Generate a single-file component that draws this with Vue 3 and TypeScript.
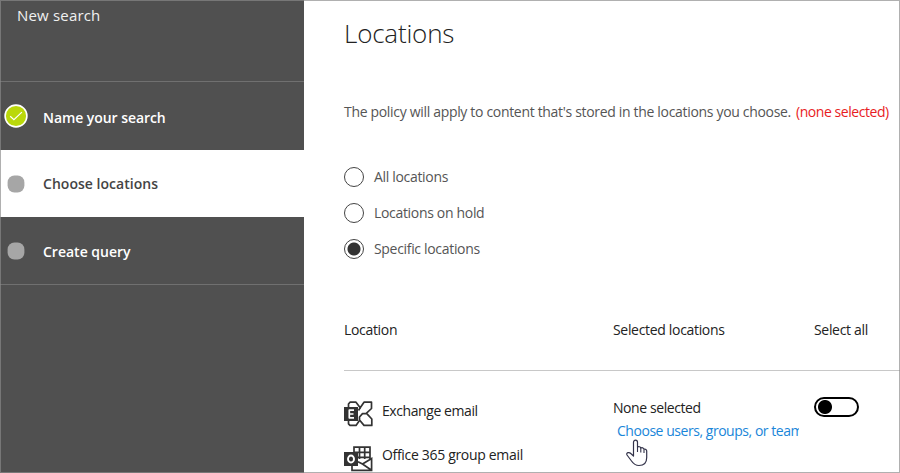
<script setup lang="ts">
type StepState = 'done' | 'current' | 'pending'

interface Step {
  label: string
  state: StepState
}

interface Choice {
  label: string
  value: string
}

const steps: Step[] = [
  { label: 'Name your search', state: 'done' },
  { label: 'Choose locations', state: 'current' },
  { label: 'Create query', state: 'pending' },
]

const choices: Choice[] = [
  { label: 'All locations', value: 'all' },
  { label: 'Locations on hold', value: 'hold' },
  { label: 'Specific locations', value: 'specific' },
]

const chosen = 'specific'
</script>

<template>
  <div class="window">
    <aside class="sidebar">
      <header class="side-title">New search</header>
      <nav class="steps">
        <div v-for="step in steps" :key="step.label" class="step" :class="step.state">
          <span class="marker">
            <svg v-if="step.state === 'done'" width="24" height="24" viewBox="0 0 24 24">
              <circle cx="12" cy="12" r="10.9" fill="#bad80a" stroke="#fff" stroke-width="1.6" />
              <path d="M6.2 12.2l3.7 3.5 8-7.6" fill="none" stroke="#fff" stroke-width="1.2" />
            </svg>
            <svg v-else width="18" height="18" viewBox="0 0 18 18">
              <rect x=".6" y=".6" width="16.800" height="16.800" rx="6.800" fill="#a6a6a6" />
            </svg>
          </span>
          <span class="step-label">{{ step.label }}</span>
        </div>
      </nav>
    </aside>

    <main class="content">
      <h1>Locations</h1>
      <p class="intro">
        <span>The policy will apply to content that's stored in the locations you choose.</span>
        <span class="warn">(none selected)</span>
      </p>

      <div class="choices">
        <div v-for="choice in choices" :key="choice.value" class="choice">
          <span class="radio" :class="{ on: choice.value === chosen }"></span>
          <span>{{ choice.label }}</span>
        </div>
      </div>

      <div class="grid head">
        <span>Location</span>
        <span>Selected locations</span>
        <span>Select all</span>
      </div>

      <div class="grid row">
        <div class="place">
          <svg width="30" height="26" viewBox="0 0 30 26" fill="none" stroke="#333" stroke-width="1.7" stroke-linejoin="round">
            <path d="M4.500 6V3L6 1.200H12L16.200 6.800L20 1.200H27.500V7.500L22 12.600H18.500L15.500 16V19L20 24.400H27.800V18L23 12.800" />
            <path d="M16.200 6.800L14.500 9.500M4.500 20V22.800L6 24.400H12L15.500 19.500" />
            <rect x="0" y="6" width="14" height="14" fill="#333" stroke="none" />
            <path d="M10 9.200H5.300V16.800H10M5.300 13H9.500" stroke="#fff" stroke-width="1.700" />
          </svg>
          <span class="tight">Exchange email</span>
        </div>
        <div class="selected">
          <span class="tight">None selected</span>
          <div class="link">Choose users, groups, or teams</div>
        </div>
        <div><span class="toggle"></span></div>
      </div>

      <div class="place second">
        <svg width="30" height="26" viewBox="0 0 30 26" fill="none" stroke="#333" stroke-width="1.7">
          <path d="M10 6V1.200H26V14M15.500 1V13M20.700 1V13M10 6.300H26M14 11.300H26" />
          <path d="M8 19V24.300H27.600V12.500L18.500 18L14 15.800M18.500 18L27.600 24.300" />
          <rect x="0" y="6" width="14" height="14" fill="#333" stroke="none" />
          <ellipse cx="7" cy="13" rx="3" ry="3.500" stroke="#fff" stroke-width="1.900" />
        </svg>
        <span>Office 365 group email</span>
      </div>
    </main>

    <svg class="pointer" width="22" height="28" viewBox="0 0 22 28">
      <path d="M7.500 17V3.200C7.500.4 11.500.4 11.500 3.200V8C12.500 7.300 14.500 7.600 14.800 9C16 8.400 17.500 8.700 18 10.200C19.500 9.700 20.700 10.600 20.700 12V18.500C20.700 23.500 18 26.500 13 26.500C9 26.500 7.500 25 5.500 22L1 16C-.2 13.500 3.200 12.800 4.800 14.500Z" fill="#fff" stroke="#33334a" stroke-width="1.200" stroke-linejoin="round" />
      <path d="M11.500 8V13M14.800 9V13.500M18 10.500V14" stroke="#33334a" stroke-width="1.100" />
    </svg>
  </div>
</template>

<style>
body {
  margin: 0;
  overflow: hidden;
}
</style>

<style scoped>
.window {
  position: relative;
  display: flex;
  width: 900px;
  height: 473px;
  overflow: hidden;
  box-sizing: border-box;
  background: #fff;
  color: #222;
  font: 14px/20px "Open Sans", "Noto Sans", sans-serif;
  white-space: nowrap;
}
.window::after {
  content: "";
  position: absolute;
  inset: 0;
  border: 1px solid rgba(138, 138, 138, 0.68);
  pointer-events: none;
}
.sidebar {
  flex: none;
  width: 304px;
  background: #505050;
  color: #fff;
}
.side-title {
  height: 82px;
  box-sizing: border-box;
  padding: 5px 0 0 17px;
  border-bottom: 1px solid #707070;
  color: #f0f0f0;
  font-size: 15px;
  letter-spacing: 0.18px;
}
.step {
  display: flex;
  align-items: center;
  height: 67px;
  box-sizing: border-box;
  font-weight: 600;
}
.step.done {
  height: 68px;
  letter-spacing: -0.06px;
}
.step.done .step-label {
  padding-top: 3px;
}
.step.current {
  background: #fff;
  color: #444;
  letter-spacing: 0.03px;
}
.step.current .step-label {
  padding-top: 1px;
}
.step.pending .step-label {
  padding-top: 2px;
}
.step.pending {
  height: 68px;
  border-bottom: 1px solid #707070;
}
.marker {
  display: flex;
  justify-content: center;
  width: 32px;
  margin-right: 11px;
}
.content {
  flex: 1;
  min-width: 0;
  padding-left: 40px;
  letter-spacing: -0.32px;
}
h1 {
  margin: 0;
  padding-top: 13px;
  font-size: 26px;
  line-height: 40px;
  font-weight: 300;
  letter-spacing: -0.2px;
}
.intro {
  display: flex;
  gap: 5px;
  margin: 49px 0 0;
  color: #555;
}
.warn {
  color: #e81c23;
  letter-spacing: -0.44px;
}
.choices {
  padding-top: 37px;
  color: #555;
}
.choice {
  display: flex;
  align-items: center;
  gap: 10px;
  height: 36px;
}
.radio {
  width: 20px;
  height: 20px;
  box-sizing: border-box;
  border: 1.500px solid #444;
  border-radius: 50%;
}
.radio.on {
  background: radial-gradient(circle, #333 6px, transparent 7px);
}
.grid {
  display: grid;
  grid-template-columns: 269px 201px 1fr;
}
.head {
  height: 104px;
  box-sizing: border-box;
  padding-top: 53px;
  border-bottom: 1px solid #c8c8c8;
}
.row {
  height: 74px;
  box-sizing: border-box;
  padding-top: 27px;
}
.place {
  display: flex;
  gap: 8px;
  padding-top: 3px;
}
.place.second {
  padding-top: 0;
}
.place svg {
  flex: none;
}
.place.second svg {
  margin-top: 1px;
}
.tight {
  letter-spacing: -0.42px;
}
.selected {
  display: flex;
  flex-direction: column;
}
.link {
  width: 182px;
  margin: 3px 0 0 4px;
  overflow: hidden;
  color: #1a86d9;
  letter-spacing: -0.46px;
}
.toggle {
  display: block;
  width: 45px;
  height: 20px;
  margin-top: -1px;
  box-sizing: border-box;
  border: 2px solid #000;
  border-radius: 10px;
  background: radial-gradient(circle at 9px 8px, #000 6.500px, transparent 7.500px);
}
.pointer {
  position: absolute;
  left: 626px;
  top: 439px;
}
</style>
